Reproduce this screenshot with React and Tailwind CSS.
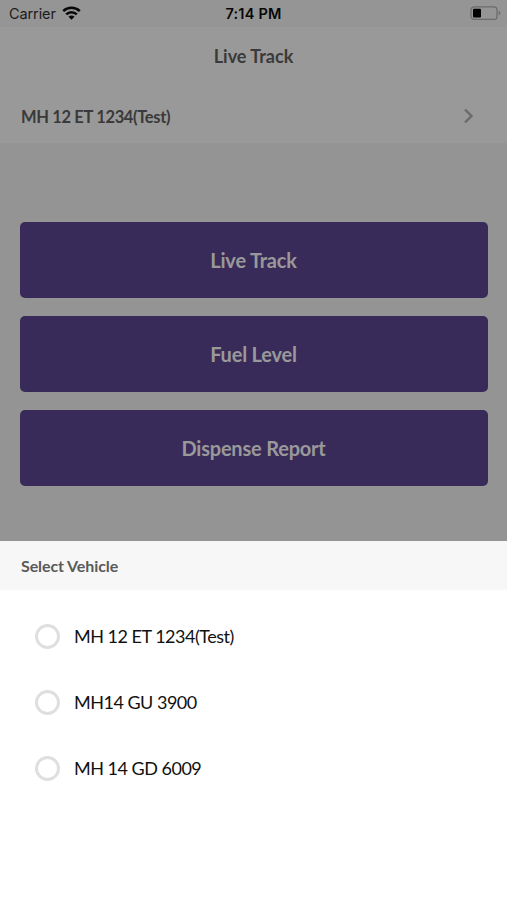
import React, { useState } from 'react';

const vehicles = [
  { id: 1, name: 'MH 12 ET 1234(Test)' },
  { id: 2, name: 'MH14 GU 3900' },
  { id: 3, name: 'MH 14 GD 6009' },
];

const actions = ['Live Track', 'Fuel Level', 'Dispense Report'];

const WifiIcon = () => (
  <svg width="19" height="14" viewBox="0 0 19 14" fill="none" stroke="#080808" strokeWidth="2.5" className="-mt-[2px]">
    <path d="M1.2 5.1a11.8 11.8 0 0 1 16.6 0" />
    <path d="M4.2 8.4a7.5 7.5 0 0 1 10.6 0" />
    <path d="M9.5 13.8L6.5 10.8a4.2 4.2 0 0 1 6 0z" fill="#080808" stroke="none" />
  </svg>
);

const BatteryIcon = () => (
  <svg width="31" height="14" viewBox="0 0 31 14" fill="none" className="-mt-px">
    <rect x="1" y="0.8" width="26" height="12.6" rx="3.2" stroke="#6c6c6c" strokeWidth="1.3" />
    <rect x="3" y="2.7" width="8" height="8.8" rx="1" fill="#000" />
    <path d="M28.7 4.8c1.1.4 1.7 1.2 1.7 2.2s-.6 1.8-1.7 2.2z" fill="#6c6c6c" />
  </svg>
);

const StatusBar = () => (
  <div className="grid grid-cols-3 items-center h-[27px] pl-[9px] pr-[6px] bg-[#959595] font-['Inter',sans-serif] text-[#1c1c1c]">
    <div className="flex items-center gap-[6px]">
      <span className="text-[14.5px] tracking-[-0.1px]">Carrier</span>
      <WifiIcon />
    </div>
    <span className="pr-[3px] text-center text-[14.5px] tracking-[0.2px] font-semibold text-[#080808]">7:14 PM</span>
    <div className="flex justify-end">
      <BatteryIcon />
    </div>
  </div>
);

const App = () => {
  const [selected, setSelected] = useState(null);

  return (
    <div className="flex flex-col h-[900px] w-full overflow-hidden bg-[#949494] font-['Lato',sans-serif]">
      {/* Header */}
      <div className="h-[143px] bg-[#999999] text-[#3a3a3a]">
        <StatusBar />
        <h1 className="h-[59px] text-center text-[18px] leading-[59px] font-bold">Live Track</h1>
        <div className="flex items-center justify-between h-[60px] pl-[21px] pr-[33px]">
          <span className="pt-[2px] text-[16.5px] tracking-[-0.35px] font-bold">MH 12 ET 1234(Test)</span>
          <svg width="11" height="16" viewBox="0 0 11 16" fill="none" stroke="#6a6a6a" strokeWidth="2.4">
            <path d="M2 1.5L8.5 8L2 14.5" />
          </svg>
        </div>
      </div>

      {/* Actions */}
      <div className="flex flex-col gap-[18px] h-[398px] pl-[20px] pr-[19px] pt-[79px]">
        {actions.map((label) => (
          <button
            key={label}
            className="h-[76px] shrink-0 rounded-[5px] bg-[#392b59] pr-px text-[20px] tracking-[-0.2px] font-bold text-[#999999]"
          >
            {label}
          </button>
        ))}
      </div>

      {/* Vehicle sheet */}
      <div className="flex-1 bg-white">
        <h2 className="h-[49px] pl-[21px] bg-[#f7f7f7] text-[16px] leading-[49px] tracking-[-0.1px] font-bold text-[#5a5a5a]">
          Select Vehicle
        </h2>
        <div className="pt-[13px] pl-[35px]">
          {vehicles.map((vehicle) => (
            <button
              key={vehicle.id}
              onClick={() => setSelected(vehicle.id)}
              className="flex items-center h-[66px] gap-[14px]"
            >
              <span className="flex items-center justify-center size-[25px] rounded-full border-[3px] border-[#dfdfdf]">
                {selected === vehicle.id && <span className="size-3 rounded-full bg-[#5f4894]" />}
              </span>
              <span className="text-[18px] tracking-[-0.5px] text-[#111111]">{vehicle.name}</span>
            </button>
          ))}
        </div>
      </div>
    </div>
  );
};

export default App;
